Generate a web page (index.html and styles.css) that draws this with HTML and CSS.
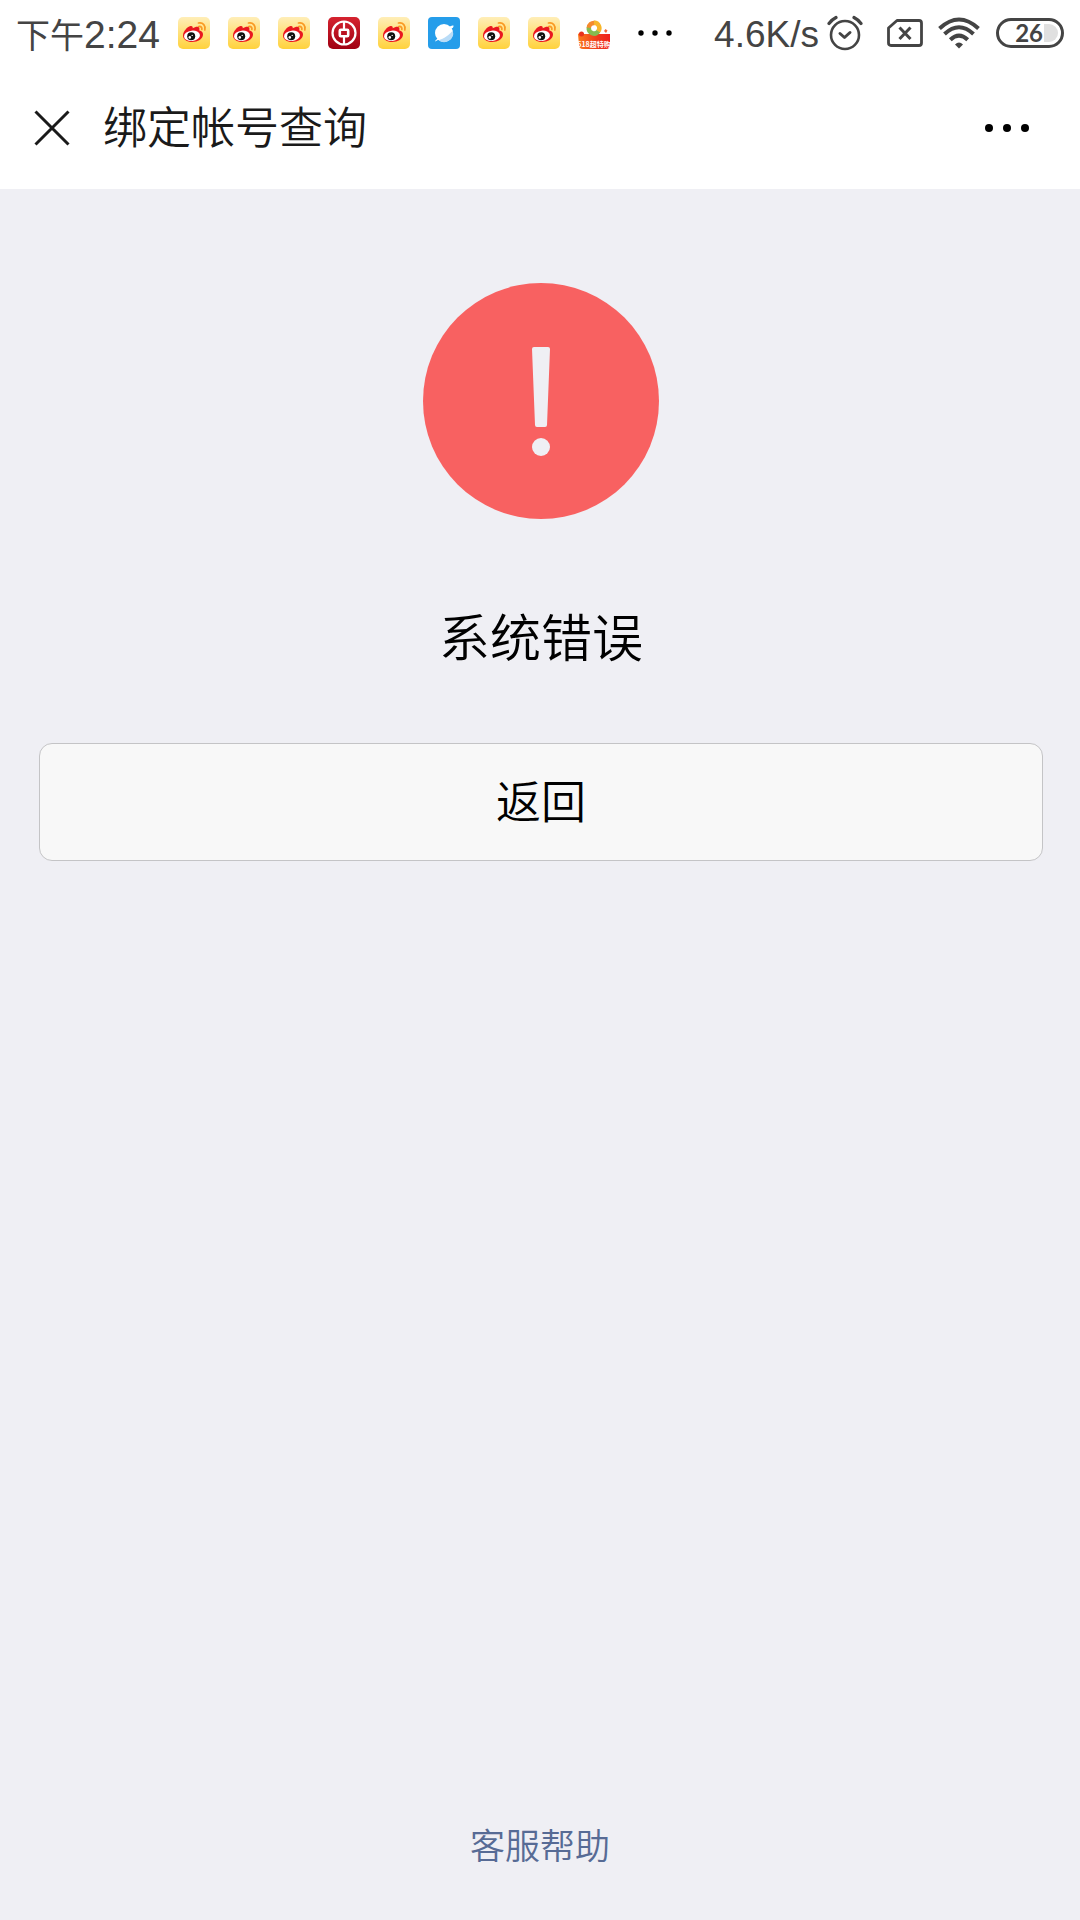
FILE: index.html
```html
<!DOCTYPE html>
<html lang="zh-CN">
<head>
<meta charset="utf-8">
<meta name="viewport" content="width=device-width, initial-scale=1">
<title>绑定帐号查询</title>
<link rel="stylesheet" href="styles.css">
</head>
<body>
<svg class="sprite" aria-hidden="true">
  <defs>
    <linearGradient id="gold" x1="0" y1="0" x2="0" y2="1"><stop offset="0" stop-color="#ffeeb8"/><stop offset="1" stop-color="#ffd23c"/></linearGradient>
    <linearGradient id="crimson" x1="0" y1="0" x2="0" y2="1"><stop offset="0" stop-color="#d5232f"/><stop offset="1" stop-color="#a00012"/></linearGradient>
    <linearGradient id="sale" x1="0" y1="0" x2="1" y2="0"><stop offset="0" stop-color="#fb7a1c"/><stop offset=".6" stop-color="#f03a1c"/><stop offset="1" stop-color="#f0201c"/></linearGradient>
  </defs>
  <symbol id="weibo" viewBox="0 0 32 32">
    <rect width="32" height="32" rx="5" fill="url(#gold)"/>
    <path d="M5 18.500C5 15 9 9.500 12.500 9C14.500 8.700 15 10 14.700 11.300C17 9.700 20.500 9 21.300 10.700C21.700 12 21.300 13 21.300 13.500C24 14 25 15.500 25 17.500C25 22 20 25 14 25C9 25 5 22.500 5 18.500Z" fill="#ea1720"/>
    <ellipse cx="14" cy="18.800" rx="8" ry="5.200" transform="rotate(-6 14 18.800)" fill="#fff"/>
    <circle cx="13.200" cy="19.200" r="4" fill="#111"/>
    <circle cx="11.800" cy="20.400" r="1.300" fill="#fff"/><circle cx="14.200" cy="18.400" r=".7" fill="#fff"/>
    <path d="M20.500 6C25 5 28 9 26.800 13M20.800 9.500C23 9 24.300 10.500 23.800 12.500" fill="none" stroke="#f99a24" stroke-width="1.700" stroke-linecap="round"/>
  </symbol>
</svg>

<header class="top">
  <div class="status">
    <div class="clock"><span class="clock-period">下午</span>2:24</div>
    <div class="notices">
      <svg class="app"><use href="#weibo"/></svg>
      <svg class="app"><use href="#weibo"/></svg>
      <svg class="app"><use href="#weibo"/></svg>
      <svg class="app" viewBox="0 0 32 32">
        <rect width="32" height="32" rx="5" fill="url(#crimson)"/>
        <g fill="none" stroke="#fff"><circle cx="16" cy="16" r="11.500" stroke-width="2.200"/><rect x="11.800" y="12.800" width="8.400" height="6.400" rx="1" stroke-width="2.600"/><path d="M16 5V12M16 20V27" stroke-width="2.200"/></g>
      </svg>
      <svg class="app"><use href="#weibo"/></svg>
      <svg class="app" viewBox="0 0 32 32">
        <rect width="32" height="32" rx="4" fill="#259dea"/>
        <circle cx="16" cy="16" r="9" fill="#fff"/>
        <path d="M25 10.500C26.500 8 25 8 22 9.500L9 22C6 25 6.500 25 10 23Z" fill="#fff"/>
        <path d="M24.700 13.500A9 9 0 0 1 10.500 23.200C16 22 21 18 24.700 13.500Z" fill="#b9dcf7"/>
      </svg>
      <svg class="app"><use href="#weibo"/></svg>
      <svg class="app"><use href="#weibo"/></svg>
      <svg class="app" viewBox="0 0 32 32">
        <path d="M0 17L3 15L6 17H32V28Q32 32 28 32H5Q1 32 1 28Z" fill="url(#sale)"/>
        <g fill="none" stroke-width="4.500"><path d="M10.800 11A5.200 5.200 0 0 1 17 6" stroke="#f58a2c"/><path d="M16 5.800A5.200 5.200 0 0 1 20 14.500" stroke="#f8b62a"/><path d="M20.300 14.200A5.200 5.200 0 0 1 10.800 10.800" stroke="#86bb50"/></g>
        <circle cx="3.500" cy="17" r="2.500" fill="#e9321e"/><path d="M26 14L27.500 12L29.500 13.500L28 16Z" fill="#f4673a"/>
        <text x="16" y="30" text-anchor="middle" class="sale-text">618超特购</text>
      </svg>
      <svg class="more-notices" viewBox="0 0 34 8"><circle cx="3" cy="4" r="2.700"/><circle cx="17" cy="4" r="2.700"/><circle cx="31" cy="4" r="2.700"/></svg>
    </div>
    <div class="system">
      <span class="speed">4.6K/s</span>
      <svg class="alarm" viewBox="0 0 36 36" fill="none" stroke="#444" stroke-width="2.600" stroke-linecap="round" stroke-linejoin="round"><circle cx="18" cy="20" r="14"/><path d="M13 18.500L17.500 22.500L23 17.500" stroke-width="3"/><path d="M2 8.500Q5 4.500 9 2.500M27 2.500Q31 4.500 34 8.500" stroke-width="3.200"/></svg>
      <svg class="sim" viewBox="0 0 36 28" fill="none" stroke="#444" stroke-width="2.800" stroke-linejoin="round"><path d="M10 1.500H32Q34.500 1.500 34.500 4V24Q34.500 26.500 32 26.500H4Q1.500 26.500 1.500 24V9Z"/><path d="M12.500 8.500L23.500 20M23.500 8.500L12.500 20" stroke-width="3"/></svg>
      <svg class="wifi" viewBox="0 0 42 32" fill="none" stroke="#444" stroke-width="4"><path d="M1.500 11.500Q21-6.500 40.500 11.500"/><path d="M6.500 17Q21 3.500 35.500 17"/><path d="M12.300 22.800Q21 14.500 29.700 22.800"/><path d="M17 27.500Q21 23.500 25 27.500L21 31.500Z" fill="#444" stroke="none"/></svg>
      <div class="battery">26<span class="battery-rest"></span></div>
    </div>
  </div>
  <nav class="nav">
    <button class="icon-button" aria-label="关闭"><svg class="close" viewBox="0 0 36 36"><path d="M1.500 1.500L34.500 34.500M34.500 1.500L1.500 34.500" stroke="#1a1a1a" stroke-width="3"/></svg></button>
    <h1 class="title">绑定帐号查询</h1>
    <button class="icon-button" aria-label="更多"><svg class="menu" viewBox="0 0 44 8"><circle cx="4" cy="4" r="4"/><circle cx="22" cy="4" r="4"/><circle cx="40" cy="4" r="4"/></svg></button>
  </nav>
</header>

<main class="content">
  <svg class="warn" viewBox="0 0 236 236">
    <circle cx="118" cy="118" r="118" fill="#f86161"/>
    <path d="M111 64H125Q127 64 127 66L124 142Q124 144 122 144H114Q112 144 112 142L109 66Q109 64 111 64Z" fill="#efeff4"/>
    <circle cx="118" cy="164" r="9" fill="#efeff4"/>
  </svg>
  <h2 class="message">系统错误</h2>
  <button class="back">返回</button>
</main>

<footer class="footer"><a class="help" href="#help">客服帮助</a></footer>
</body>
</html>
```
FILE: styles.css
```css
* {
  box-sizing: border-box;
}

body {
  margin: 0;
  min-height: 100vh;
  display: flex;
  flex-direction: column;
  background: #efeff4;
  color: #000;
  font-family: "Noto Sans CJK SC", sans-serif;
  font-weight: 350;
}

svg {
  display: block;
  flex: none;
}

button {
  font: inherit;
  color: inherit;
  cursor: pointer;
}

.sprite {
  position: absolute;
  width: 0;
  height: 0;
}

.top {
  background: #fff;
}

.status {
  display: flex;
  align-items: center;
  height: 66px;
  padding: 0 16px;
  color: #444;
  font-family: "Liberation Sans", "Noto Sans CJK SC", sans-serif;
  font-size: 37px;
  font-weight: 400;
  line-height: 40px;
  white-space: nowrap;
}

.clock {
  width: 162px;
  padding-top: 2px;
  font-size: 39px;
}

.clock-period {
  font-family: "Noto Sans CJK SC", sans-serif;
  font-size: 34px;
}

.notices {
  display: flex;
  align-items: center;
  gap: 18px;
}

.app {
  width: 32px;
  height: 32px;
}

.sale-text {
  fill: #fff;
  font: 700 7px "Noto Sans CJK SC", sans-serif;
}

.more-notices {
  width: 34px;
  height: 8px;
  margin-left: 10px;
}

.system {
  display: flex;
  align-items: center;
  margin-left: auto;
}

.speed {
  padding-top: 4px;
}

.alarm {
  width: 36px;
  height: 36px;
  margin: 0 24px 0 8px;
}

.sim {
  width: 36px;
  height: 28px;
}

.wifi {
  width: 42px;
  height: 32px;
  margin: 0 16px 0 15px;
}

.battery {
  display: flex;
  align-items: center;
  justify-content: flex-end;
  gap: 1px;
  width: 68px;
  height: 30px;
  padding-right: 3px;
  border: 3px solid #444;
  border-radius: 15px;
  font: 700 24px/24px Lato, sans-serif;
}

.battery-rest {
  width: 14px;
  height: 18px;
  border-radius: 0 9px 9px 0;
  background: #e0e0e0;
}

.nav {
  display: flex;
  align-items: center;
  height: 123px;
  padding: 0 51px 0 34px;
}

.icon-button {
  padding: 0;
  border: 0;
  background: none;
}

.close {
  width: 36px;
  height: 36px;
}

.menu {
  width: 44px;
  height: 8px;
}

.title {
  flex: 1;
  margin: 0 0 0 33px;
  padding-bottom: 5px;
  color: #1a1a1a;
  font-size: 44px;
  font-weight: inherit;
  line-height: 60px;
}

.content {
  flex: 1;
  display: flex;
  flex-direction: column;
  align-items: center;
  padding: 94px 37px 0 39px;
}

.warn {
  width: 236px;
  height: 236px;
}

.message {
  margin: 76px 0 68px;
  font-size: 51px;
  font-weight: inherit;
  line-height: 80px;
}

.back {
  width: 100%;
  height: 118px;
  padding: 0 0 6px;
  border: 1px solid #c4c4c6;
  border-radius: 13px;
  background: #f8f8f8;
  font-size: 45px;
}

.footer {
  padding-bottom: 51px;
  text-align: center;
}

.help {
  color: #576b95;
  font-size: 35px;
  line-height: 50px;
  text-decoration: none;
}
```
